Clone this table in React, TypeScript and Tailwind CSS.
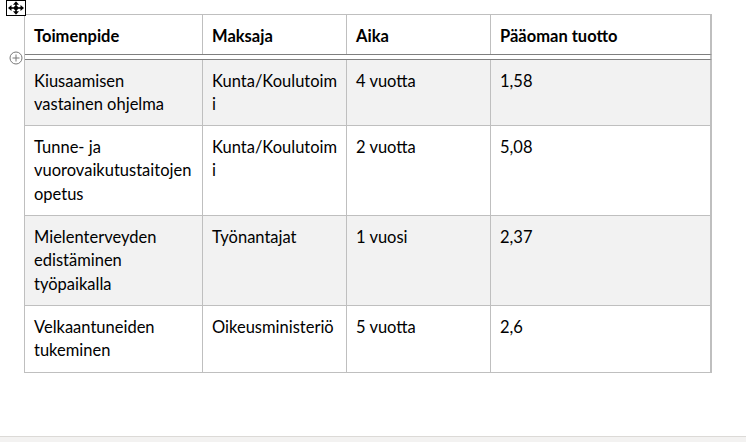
import React from "react";

const font = { fontFamily: "Lato, 'Open Sans', sans-serif" };

type Row = { cells: string[][]; h: string; shaded: boolean };

const rows: Row[] = [
  {
    cells: [["Kiusaamisen", "vastainen ohjelma"], ["Kunta/Koulutoim", "i"], ["4 vuotta"], ["1,58"]],
    h: "h-[66px]",
    shaded: true,
  },
  {
    cells: [["Tunne- ja", "vuorovaikutustaitojen", "opetus"], ["Kunta/Koulutoim", "i"], ["2 vuotta"], ["5,08"]],
    h: "h-[90px]",
    shaded: false,
  },
  {
    cells: [["Mielenterveyden", "edistäminen", "työpaikalla"], ["Työnantajat"], ["1 vuosi"], ["2,37"]],
    h: "h-[90px]",
    shaded: true,
  },
  {
    cells: [["Velkaantuneiden", "tukeminen"], ["Oikeusministeriö"], ["5 vuotta"], ["2,6"]],
    h: "h-[67px]",
    shaded: false,
  },
];

const widths = ["w-[178px]", "w-[144px]", "w-[144px]", "w-[221px]"];

function MoveHandle() {
  return (
    <div className="absolute left-[6px] top-0 w-[20px] h-[16px] border border-black bg-white">
      <svg width="18" height="14" viewBox="0 0 18 14" className="block">
        <line x1="9" y1="2" x2="9" y2="12" stroke="#000" strokeWidth="1.6" />
        <line x1="3" y1="7" x2="15" y2="7" stroke="#000" strokeWidth="1.6" />
        <polygon points="9,0.3 6,3.8 12,3.8" fill="#000" />
        <polygon points="9,13.7 6,10.2 12,10.2" fill="#000" />
        <polygon points="1,7 4.5,4 4.5,10" fill="#000" />
        <polygon points="17,7 13.5,4 13.5,10" fill="#000" />
        <circle cx="9" cy="7" r="2.2" fill="#000" />
      </svg>
    </div>
  );
}

function PlusCircle() {
  return (
    <svg width="14" height="14" viewBox="0 0 14 14" className="absolute left-[9px] top-[51px]">
      <circle cx="7" cy="7" r="6" fill="white" stroke="#7a7a7a" strokeWidth="1" />
      <line x1="7" y1="3.5" x2="7" y2="10.5" stroke="#7a7a7a" strokeWidth="1" />
      <line x1="3.5" y1="7" x2="10.5" y2="7" stroke="#7a7a7a" strokeWidth="1" />
    </svg>
  );
}

export default function App() {
  return (
    <div className="w-[746px] h-[442px] flex flex-col bg-white text-black overflow-hidden" style={font}>
      <div className="flex-1 relative pt-[14px] pl-[24px]">
        <MoveHandle />
        <div className="w-[688px] border-t border-l border-[#bfbfbf]">
          <div className="flex h-[39px]">
            {["Toimenpide", "Maksaja", "Aika", "Pääoman tuotto"].map((t, i) => (
              <div
                key={t}
                className={`${widths[i]} shrink-0 ${i === 3 ? "border-r-2" : "border-r"} border-[#bfbfbf] pl-[9px] pt-[10px] font-bold text-[16.5px] leading-[23px]`}
              >
                {t}
              </div>
            ))}
          </div>
          <div className="h-[6px] border-t border-b border-[#7f7f7f] bg-white border-r-2 border-r-[#bfbfbf]" />
          {rows.map((r, ri) => (
            <div key={ri} className={`flex ${r.h} border-b border-[#bfbfbf] ${r.shaded ? "bg-[#f2f2f2]" : "bg-white"}`}>
              {r.cells.map((lines, ci) => (
                <div
                  key={ci}
                  className={`${widths[ci]} shrink-0 ${ci === 3 ? "border-r-2" : "border-r"} border-[#bfbfbf] pl-[9px] pt-[10px] text-[16.5px] leading-[23.3px]`}
                >
                  {lines.map((l, li) => (
                    <div key={li} className="whitespace-nowrap">
                      {l}
                    </div>
                  ))}
                </div>
              ))}
            </div>
          ))}
        </div>
        <PlusCircle />
      </div>
      <div className="h-[6px] border-t border-[#dcdad7] bg-[#f3f2f1]" />
    </div>
  );
}
